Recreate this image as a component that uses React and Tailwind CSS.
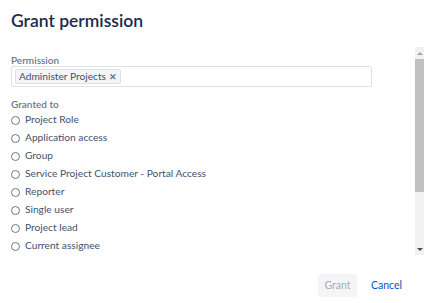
import React from 'react';

const options = [
  'Project Role',
  'Application access',
  'Group',
  'Service Project Customer - Portal Access',
  'Reporter',
  'Single user',
  'Project lead',
  'Current assignee',
];

export default function App() {
  return (
    <div className="w-[424px] h-[303px] bg-white flex flex-col overflow-hidden font-['Lato',sans-serif]">
      {/* header */}
      <div className="h-[47px] pl-[11px] pt-[9px]">
        <h1 className="text-[17.5px] leading-[24px] font-semibold text-[#172b4d]">Grant permission</h1>
      </div>

      {/* scrollable body */}
      <div className="h-[208px] flex">
        <div className="flex-1 pl-[11px] pt-[7px]">
          <div className="text-[10px] leading-[12px] text-[#6b778c] font-semibold">Permission</div>
          <div className="w-[361px] h-[21px] border border-[#dfe1e6] rounded-[2px] flex items-center pl-[3px]">
            <span className="h-[15px] flex items-center gap-[3px] px-[3px] bg-[#f4f5f7] border border-[#dfe1e6] rounded-[2px] text-[10.2px] text-[#42526e]">
              Administer Projects
              <span className="text-[9px] leading-none text-[#6b778c] font-bold">✕</span>
            </span>
          </div>
          <div className="mt-[11px] text-[10px] leading-[12px] text-[#6b778c] font-semibold">Granted to</div>
          <div className="mt-[1px] flex flex-col">
            {options.map((o) => (
              <label key={o} className="h-[18px] flex items-center gap-[5px] text-[10.2px] text-[#42526e]">
                <span className="w-[9px] h-[9px] rounded-full border border-[#6b778c]" />
                {o}
              </label>
            ))}
          </div>
        </div>
        {/* scrollbar */}
        <div className="w-[9px] bg-[#f1f1f1] flex flex-col items-center">
          <div className="h-[12px] flex items-center justify-center">
            <div className="w-0 h-0 border-l-[3px] border-r-[3px] border-b-[3px] border-l-transparent border-r-transparent border-b-[#a3a3a3]" />
          </div>
          <div className="w-[9px] h-[133px] bg-[#c1c1c1]" />
          <div className="flex-1" />
          <div className="h-[12px] flex items-center justify-center">
            <div className="w-0 h-0 border-l-[3px] border-r-[3px] border-t-[3px] border-l-transparent border-r-transparent border-t-[#505050]" />
          </div>
        </div>
      </div>

      {/* footer */}
      <div className="flex-1 flex justify-end items-start pt-[19px] pr-[14px] gap-[6px]">
        <button className="w-[39px] h-[23px] rounded-[3px] bg-[#f4f5f7] text-[10.5px] text-[#a5adba]">Grant</button>
        <button className="h-[23px] px-[8px] text-[10.5px] text-[#0052cc]">Cancel</button>
      </div>
    </div>
  );
}
